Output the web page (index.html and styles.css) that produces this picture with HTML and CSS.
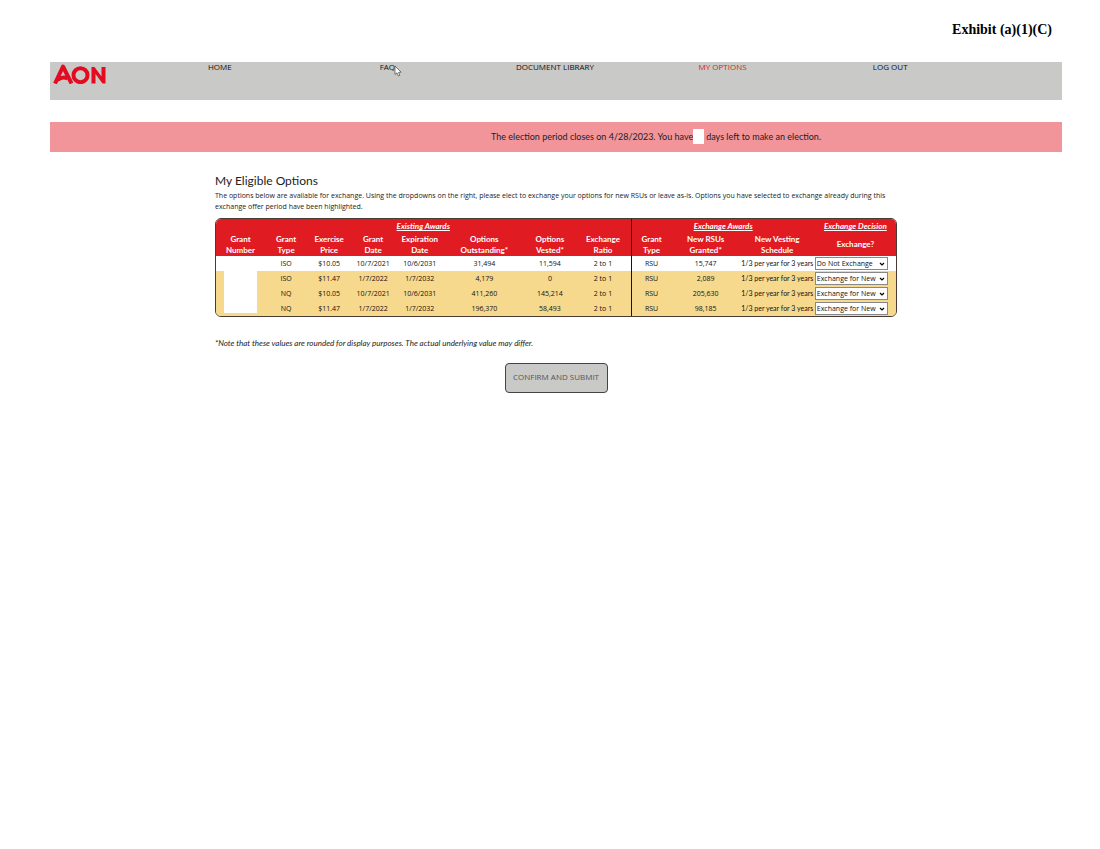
FILE: index.html
```html
<!DOCTYPE html>
<html lang="en">
<head>
<meta charset="utf-8">
<title>My Eligible Options</title>
<link rel="stylesheet" href="styles.css">
</head>
<body>
<p class="exhibit">Exhibit (a)(1)(C)</p>
<header class="topbar">
  <a class="logo" href="#" aria-label="Aon">
    <svg viewBox="0 0 53 20" width="53" height="20" fill="none" stroke="#e30b20" stroke-width="4">
      <path d="M2 19.500 L10 2.500 L18.500 19.500 M4.500 16 Q9.500 12 14.500 14.500" stroke-linejoin="round"/>
      <circle cx="27.500" cy="11.200" r="7"/>
      <path d="M38.500 19.500V3H41.500L48.500 12.500V3H52.500V19.500H49.500L42.500 10V19.500Z" fill="#e30b20" stroke="none"/>
    </svg>
  </a>
  <nav class="nav">
    <a href="#">HOME</a>
    <a href="#" class="hovered">FAQ<svg class="cursor" viewBox="0 0 8 12" width="8" height="12"><path d="M1 1 V9.500 L3 7.800 L4.300 11 L5.800 10.400 L4.600 7.400 L7.200 7.200 Z" fill="#fff" stroke="#444" stroke-width=".7"/></svg></a>
    <a href="#">DOCUMENT LIBRARY</a>
    <a href="#" class="current">MY OPTIONS</a>
    <a href="#">LOG OUT</a>
  </nav>
</header>
<div class="banner">The election period closes on 4/28/2023. You have<span class="days"></span>days left to make an election.</div>
<main class="content">
  <h1>My Eligible Options</h1>
  <p class="intro">The options below are available for exchange. Using the dropdowns on the right, please elect to exchange your options for new RSUs or leave as-is. Options you have selected to exchange already during this exchange offer period have been highlighted.</p>
  <div class="frame">
  <table class="grants">
    <colgroup><col class="w49"><col class="w42"><col class="w44"><col class="w44"><col class="w49"><col class="w80"><col class="w51"><col class="w56"><col class="w40"><col class="w68"><col class="w75"><col class="w81"></colgroup>
    <thead>
      <tr class="groups"><th colspan="8" class="divide">Existing Awards</th><th colspan="3">Exchange Awards</th><th>Exchange Decision</th></tr>
      <tr class="heads"><th>Grant<br>Number</th><th>Grant<br>Type</th><th>Exercise<br>Price</th><th>Grant<br>Date</th><th>Expiration<br>Date</th><th>Options<br>Outstanding*</th><th>Options<br>Vested*</th><th class="divide">Exchange<br>Ratio</th><th>Grant<br>Type</th><th>New RSUs<br>Granted*</th><th>New Vesting<br>Schedule</th><th>Exchange?</th></tr>
    </thead>
    <tbody>
      <tr><td><span class="blank"></span></td><td>ISO</td><td>$10.05</td><td>10/7/2021</td><td>10/6/2031</td><td>31,494</td><td>11,594</td><td class="divide">2 to 1</td><td>RSU</td><td>15,747</td><td class="vesting">1/3 per year for 3 years</td><td class="choice"><select aria-label="Exchange decision, grant 1"><option>Do Not Exchange</option><option>Exchange for New</option></select></td></tr>
      <tr class="picked"><td><span class="blank"></span></td><td>ISO</td><td>$11.47</td><td>1/7/2022</td><td>1/7/2032</td><td>4,179</td><td>0</td><td class="divide">2 to 1</td><td>RSU</td><td>2,089</td><td class="vesting">1/3 per year for 3 years</td><td class="choice"><select aria-label="Exchange decision, grant 2"><option>Exchange for New</option><option>Do Not Exchange</option></select></td></tr>
      <tr class="picked"><td><span class="blank"></span></td><td>NQ</td><td>$10.05</td><td>10/7/2021</td><td>10/6/2031</td><td>411,260</td><td>145,214</td><td class="divide">2 to 1</td><td>RSU</td><td>205,630</td><td class="vesting">1/3 per year for 3 years</td><td class="choice"><select aria-label="Exchange decision, grant 3"><option>Exchange for New</option><option>Do Not Exchange</option></select></td></tr>
      <tr class="picked last"><td><span class="blank"></span></td><td>NQ</td><td>$11.47</td><td>1/7/2022</td><td>1/7/2032</td><td>196,370</td><td>58,493</td><td class="divide">2 to 1</td><td>RSU</td><td>98,185</td><td class="vesting">1/3 per year for 3 years</td><td class="choice"><select aria-label="Exchange decision, grant 4"><option>Exchange for New</option><option>Do Not Exchange</option></select></td></tr>
    </tbody>
  </table>
  </div>
  <p class="note">*Note that these values are rounded for display purposes. The actual underlying value may differ.</p>
  <button class="submit" type="button">CONFIRM AND SUBMIT</button>
</main>
</body>
</html>
```
FILE: styles.css
```css
* { box-sizing: border-box; }
body {
  margin: 0;
  padding: 20px 38px 0 50px;
  background: #fff;
  color: #222;
  font-family: Lato, "Open Sans", sans-serif;
  font-size: 8px;
}
.exhibit {
  margin: 0 10px 22px 0;
  text-align: right;
  font: bold 14px/20px "Liberation Serif", serif;
  color: #000;
}
.topbar {
  display: grid;
  grid-template-columns: 86px 1fr 88px;
  height: 38px;
  background: #c9c9c7;
}
.logo { padding: 2px 0 0 3px; }
.logo svg { display: block; }
.nav {
  display: grid;
  grid-template-columns: repeat(5, 1fr);
  line-height: 10px;
  text-align: center;
}
.nav a { color: #111; text-decoration: none; font-family: "Open Sans", sans-serif; }
.nav .current { color: #e0222b; }
.hovered { position: relative; }
.cursor { position: absolute; top: 3px; left: calc(50% + 7px); }
.banner {
  margin-top: 22px;
  padding: 0 0 1px 200px;
  display: flex;
  justify-content: center;
  align-items: center;
  height: 30px;
  background: #f1959b;
  font-size: 9px;
}
.days { width: 11px; height: 15px; margin: 0 2px 0 0; background: #fff; }
.content { max-width: 682px; margin: 21px auto 0; }
h1 { margin: 0; font-size: 12px; line-height: 16px; font-weight: 400; }
.intro { margin: 1px 0 6px; font: 7px/11px "Open Sans", sans-serif; }
.frame {
  border: 1px solid #4a3a34;
  border-radius: 6px;
  overflow: hidden;
}
.grants { width: 100%; table-layout: fixed; border-collapse: separate; border-spacing: 0; }
.w40 { width: 40px; } .w42 { width: 42px; } .w44 { width: 44px; }
.w49 { width: 49px; } .w51 { width: 51px; } .w56 { width: 56px; }
.w68 { width: 68px; } .w75 { width: 75px; } .w80 { width: 80px; } .w81 { width: 81px; }
th, td { padding: 0; text-align: center; white-space: nowrap; }
thead { background: #e01b22; color: #fff; }
.groups th { height: 14px; line-height: 14px; font-style: italic; text-decoration: underline; }
.heads th { height: 23px; line-height: 11px; }
td { height: 15px; font: 7px/13px "Open Sans", sans-serif; color: #111; }
.divide { border-right: 1px solid #221010; }
.picked { background: #f7d98e; }
.blank { display: block; height: 15px; margin: 0 8px; background: #fff; }
.last .blank { height: 12px; margin-bottom: 3px; }
.vesting { font-family: Lato, sans-serif; }
.choice { text-align: left; }
select {
  display: block;
  width: 73px;
  height: 13px;
  padding: 0 8px 0 1px;
  appearance: none;
  border: 1px solid #888;
  border-radius: 0;
  background: #fff url("data:image/svg+xml,%3Csvg xmlns='http://www.w3.org/2000/svg' viewBox='0 0 6 4'%3E%3Cpath d='M1 1L3 3L5 1' fill='none' stroke='%23000' stroke-width='1.200'/%3E%3C/svg%3E") no-repeat right 2px center / 6px 4px;
  color: #111;
  font: 7px/11px "Open Sans", sans-serif;
}
.note { margin: 21px 0 14px; line-height: 11px; font-style: italic; }
.submit {
  display: block;
  width: 103px;
  height: 30px;
  margin: 0 auto;
  padding: 0 0 3px;
  border: 1px solid #444;
  border-radius: 4px;
  background: #c9c9c7;
  color: #555;
  font: 8px "Open Sans", sans-serif;
}
```
